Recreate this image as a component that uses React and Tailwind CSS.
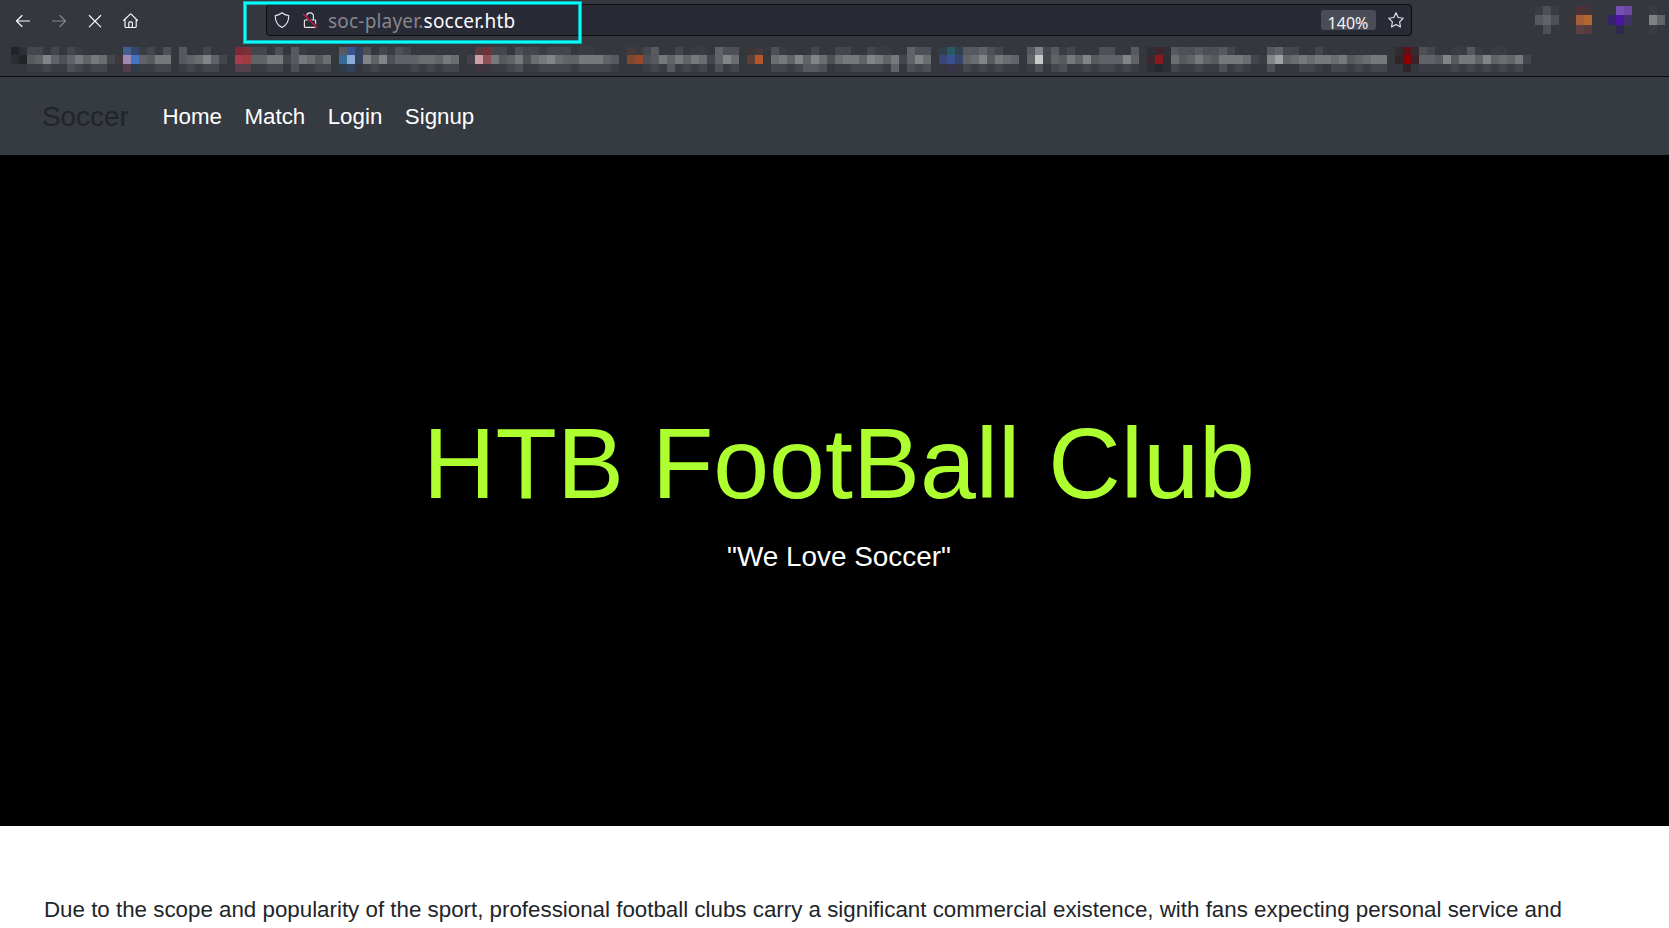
const SHADES = {
  a: "#3a3c43", b: "#44464d", c: "#4e5058", d: "#58595f", e: "#626368",
  f: "#6c6d71", g: "#77787c", h: "#838488", i: "#a0a1a4",
};

// Each column lists its top, middle and bottom tile; "." leaves the toolbar visible.
const BOOKMARKS = `
#222428,#2c2e33,. #2e3038,#222428,. b,d,a b,e,a .,h,b b,e,a .,c,a b,e,c a,g,b .,e,a .,g,b .,f,b .,b,. .,#42363d,.
#42608f,#a088b5,#553d48 #33476f,#4473bf,#303b4b a,e,a b,d,a .,g,b c,g,b .,.,. d,d,a .,e,b .,f,a b,h,b .,e,b .,b,. .,.,.
#7a2a36,#a73b49,#56404a #783136,#9a3d42,#52414a b,e,a b,e,a .,g,b c,g,b .,b,. d,d,c a,g,a .,f,a .,d,b .,f,b .,.,.
d,#386a98,#2f3c4e #36568f,#8cacd8,#33415a #34415f,#34415f,. c,h,a .,e,b b,h,a a,c,a c,e,a b,e,a .,e,b .,f,a .,f,b .,e,a .,g,b .,f,b .,.,.
.,#463e49,. #5c3a42,#cc9fa8,#40343f #6e3339,#8c4f57,#3d3641 b,g,a b,d,a .,e,b c,g,c b,c,a b,f,a a,g,b b,h,b b,f,b b,e,b .,e,a a,g,b a,g,b .,g,b .,e,b .,d,a .,.,.
#453a3c,#7d4a30,. #3a393c,#96492a,. b,c,a d,d,b .,g,a .,e,d b,g,a .,e,b a,g,a a,f,b .,b,. e,e,c c,h,a c,f,b .,.,.
#3b3739,#5b3f38,. #453838,#b3562a,. .,.,. c,f,b a,g,b .,e,a .,h,b .,e,d b,h,d .,f,c .,c,. b,f,a b,g,a .,g,b .,e,b b,h,b a,g,b a,e,a .,g,e .,b,. e,e,c c,h,b c,f,c .,.,.
#303f4a,#3a4677,#36343f #2a5966,#3c4f8f,#38344a #30424b,#37426d,. d,e,b d,f,a e,h,b c,d,a b,g,b .,f,a .,e,a .,.,.
d,e,a h,#c8c8c8,c b,b,. d,e,b a,d,c b,g,a .,e,a .,h,b .,d,a c,e,b c,e,b .,e,a .,h,b d,e,a .,.,.
#2d2e36,#3c2930,#2c2d35 #40252c,#8a181d,#27282f #2d2e36,#2d2e36,#2d2e36 d,f,b c,d,a c,e,a d,g,b c,e,a c,d,a d,g,c b,g,a .,g,b .,f,a .,b,. .,a,.
d,h,c e,i,. b,e,. b,f,. .,g,b .,f,b b,g,a .,g,. .,f,b .,g,b .,d,a .,e,b .,f,a .,g,b .,g,b .,.,.
#322b30,#30262a,. #5e1119,#880000,#2e2629 #332b30,#3c2228,. c,e,a b,e,a .,d,a .,h,a a,d,b a,g,a d,g,b a,e,a .,h,b a,e,a a,f,b .,e,a .,g,b .,b,.`;

const EXTENSIONS = [
  "a,d,. c,e,c a,c,.",
  ".,#3c3638,. #4a3236,#a35f38,#5c4042 #463338,#b5672f,#543c3e",
  ".,#36226a,. #7650b0,#4a169f,#302752 #6e47a0,#40316a,.",
  "a,#808185,a .,e,.",
];

function Mosaic({ data, rows }) {
  return (
    <div className="flex">
      {data.trim().split(/\s+/).map((column, x) => (
        <div key={x} className={`grid w-2 shrink-0 ${rows}`}>
          {column.split(",").map((tile, y) => (
            <div key={y} style={{ backgroundColor: tile === "." ? "transparent" : SHADES[tile] || tile }} />
          ))}
        </div>
      ))}
    </div>
  );
}

function Icon({ className = "", children }) {
  return (
    <svg viewBox="0 0 16 16" fill="none" stroke="currentColor" strokeWidth="1.15" strokeLinecap="round" strokeLinejoin="round" className={`size-4 shrink-0 ${className}`}>
      {children}
    </svg>
  );
}

function Toolbar() {
  return (
    <div className="flex h-[47px] pl-[15px] font-['Noto_Sans',sans-serif]">
      <div className="flex h-[42px] w-[251px] items-center gap-5 text-[#fbfbfe]">
        <Icon><path d="M14.5 8H1.5M7 2.5 1.5 8 7 13.5" /></Icon>
        <Icon className="text-[#85868b]"><path d="M1.5 8h13M9 2.5 14.5 8 9 13.5" /></Icon>
        <Icon><path d="m2.3 2.5 11.4 11.4M13.7 2.5 2.3 13.9" /></Icon>
        <Icon>
          <path d="M.7 7.500 7 1.300a1 1 0 0 1 1.400 0L14.500 7.500M2 6.500v6.700c0 .8.5 1.300 1.300 1.300h8.600c.8 0 1.300-.5 1.300-1.300V6.500M5.800 14.300V10c0-.8.4-1.200 1.100-1.200h1.400c.7 0 1.100.4 1.100 1.200v4.300" />
        </Icon>
      </div>
      <div className="relative mt-1 flex h-8 w-[1146px] items-center rounded border border-[#0c0c0d] bg-[#282a36] pl-[7px] pr-[7px]">
        <Icon className="text-[#e6e6e8]"><path d="M8 .8c2 1.6 4 2.4 6.7 2.8.2 5.5-1.7 9.4-6.7 11.9C3 13 1.100 9.100 1.300 3.600 4 3.200 6 2.400 8 .8Z" /></Icon>
        <Icon className="ml-3 text-[#e6e6e8]">
          <path d="M4.600 8V4.100C4.600 2.100 6 .8 8 .8s3.400 1.300 3.400 3.300V8M3.200 8h9.600a.8.8 0 0 1 .8.8v5.400a1.200 1.200 0 0 1-1.200 1.200H3.600a1.200 1.200 0 0 1-1.200-1.200V8.800A.8.8 0 0 1 3.200 8Z" />
          <path d="M1.500 2.200 14.500 14.500" stroke="#282a36" strokeWidth="2.600" />
          <path d="M1.300 2.200 14.700 14.900" stroke="#e01b48" strokeWidth="1.300" />
        </Icon>
        <div className="ml-2.5 pt-0.5 text-[19px] leading-7 tracking-[0.2px] whitespace-nowrap text-[#fbfbfe]">
          <span className="text-[#85868d]">soc-player.</span>soccer.htb
        </div>
        <div className="ml-auto mr-3 flex h-5 w-[55px] items-center justify-center rounded-[3px] bg-[#4a4c56] pt-[6px] pr-px text-[16px] leading-5 text-[#f3f3f5]">140%</div>
        <Icon className="text-[#e6e6e8]">
          <path d="m8 .8 2.200 4.700 5.100.7-3.700 3.600.9 5.200L8 12.500 3.500 15l.9-5.200L.7 6.200l5.100-.7Z" />
        </Icon>
        <div className="absolute -left-[23px] -top-[3px] h-[41px] w-[337px] border-2 border-[#00ffff] shadow-[0_0_0_1px_rgba(0,255,255,0.6),inset_0_0_0_1px_rgba(0,255,255,0.6)]" />
      </div>
      <div className="mt-1.5 ml-[123px] flex">
        <Mosaic data={EXTENSIONS[0]} rows="grid-rows-[9px_10px_9px]" />
        <div className="ml-[9px]"><Mosaic data={EXTENSIONS[1]} rows="grid-rows-[9px_10px_9px]" /></div>
        <div className="ml-4"><Mosaic data={EXTENSIONS[2]} rows="grid-rows-[9px_10px_9px]" /></div>
        <div className="ml-[17px]"><Mosaic data={EXTENSIONS[3]} rows="grid-rows-[9px_10px_9px]" /></div>
      </div>
    </div>
  );
}

export default function App() {
  return (
    <div className="flex h-[928px] w-[1669px] flex-col overflow-hidden bg-white font-['Liberation_Sans',Arial,sans-serif]">
      <header className="h-[77px] shrink-0 border-b border-[#0c0c0d] bg-[#35373e]">
        <Toolbar />
        <div className="pl-[11px]"><Mosaic data={BOOKMARKS} rows="grid-rows-[8px_9px_8px]" /></div>
      </header>
      <nav className="flex h-[78px] shrink-0 items-center bg-[#363a41] pt-0.5 pl-[42px]">
        <a className="mr-[33.6px] text-[27.907px] leading-[42px] text-[#212529]">Soccer</a>
        <div className="flex gap-[22.5px] text-[22.326px] leading-[34px] text-white">
          <a>Home</a><a>Match</a><a>Login</a><a>Signup</a>
        </div>
      </nav>
      <main className="flex h-[671px] shrink-0 flex-col items-center bg-black pt-[248px] pl-[9px] text-white">
        <h1 className="text-[100.465px] leading-[121px] text-[#adff2f]">HTB FootBall Club</h1>
        <p className="mt-3 text-[27.907px] leading-[42px]">"We Love Soccer"</p>
      </main>
      <p className="shrink-0 pt-[67px] pl-[44px] text-[22.33px] leading-[34px] whitespace-nowrap text-[#212529]">
        Due to the scope and popularity of the sport, professional football clubs carry a significant commercial existence, with fans expecting personal service and
      </p>
    </div>
  );
}
